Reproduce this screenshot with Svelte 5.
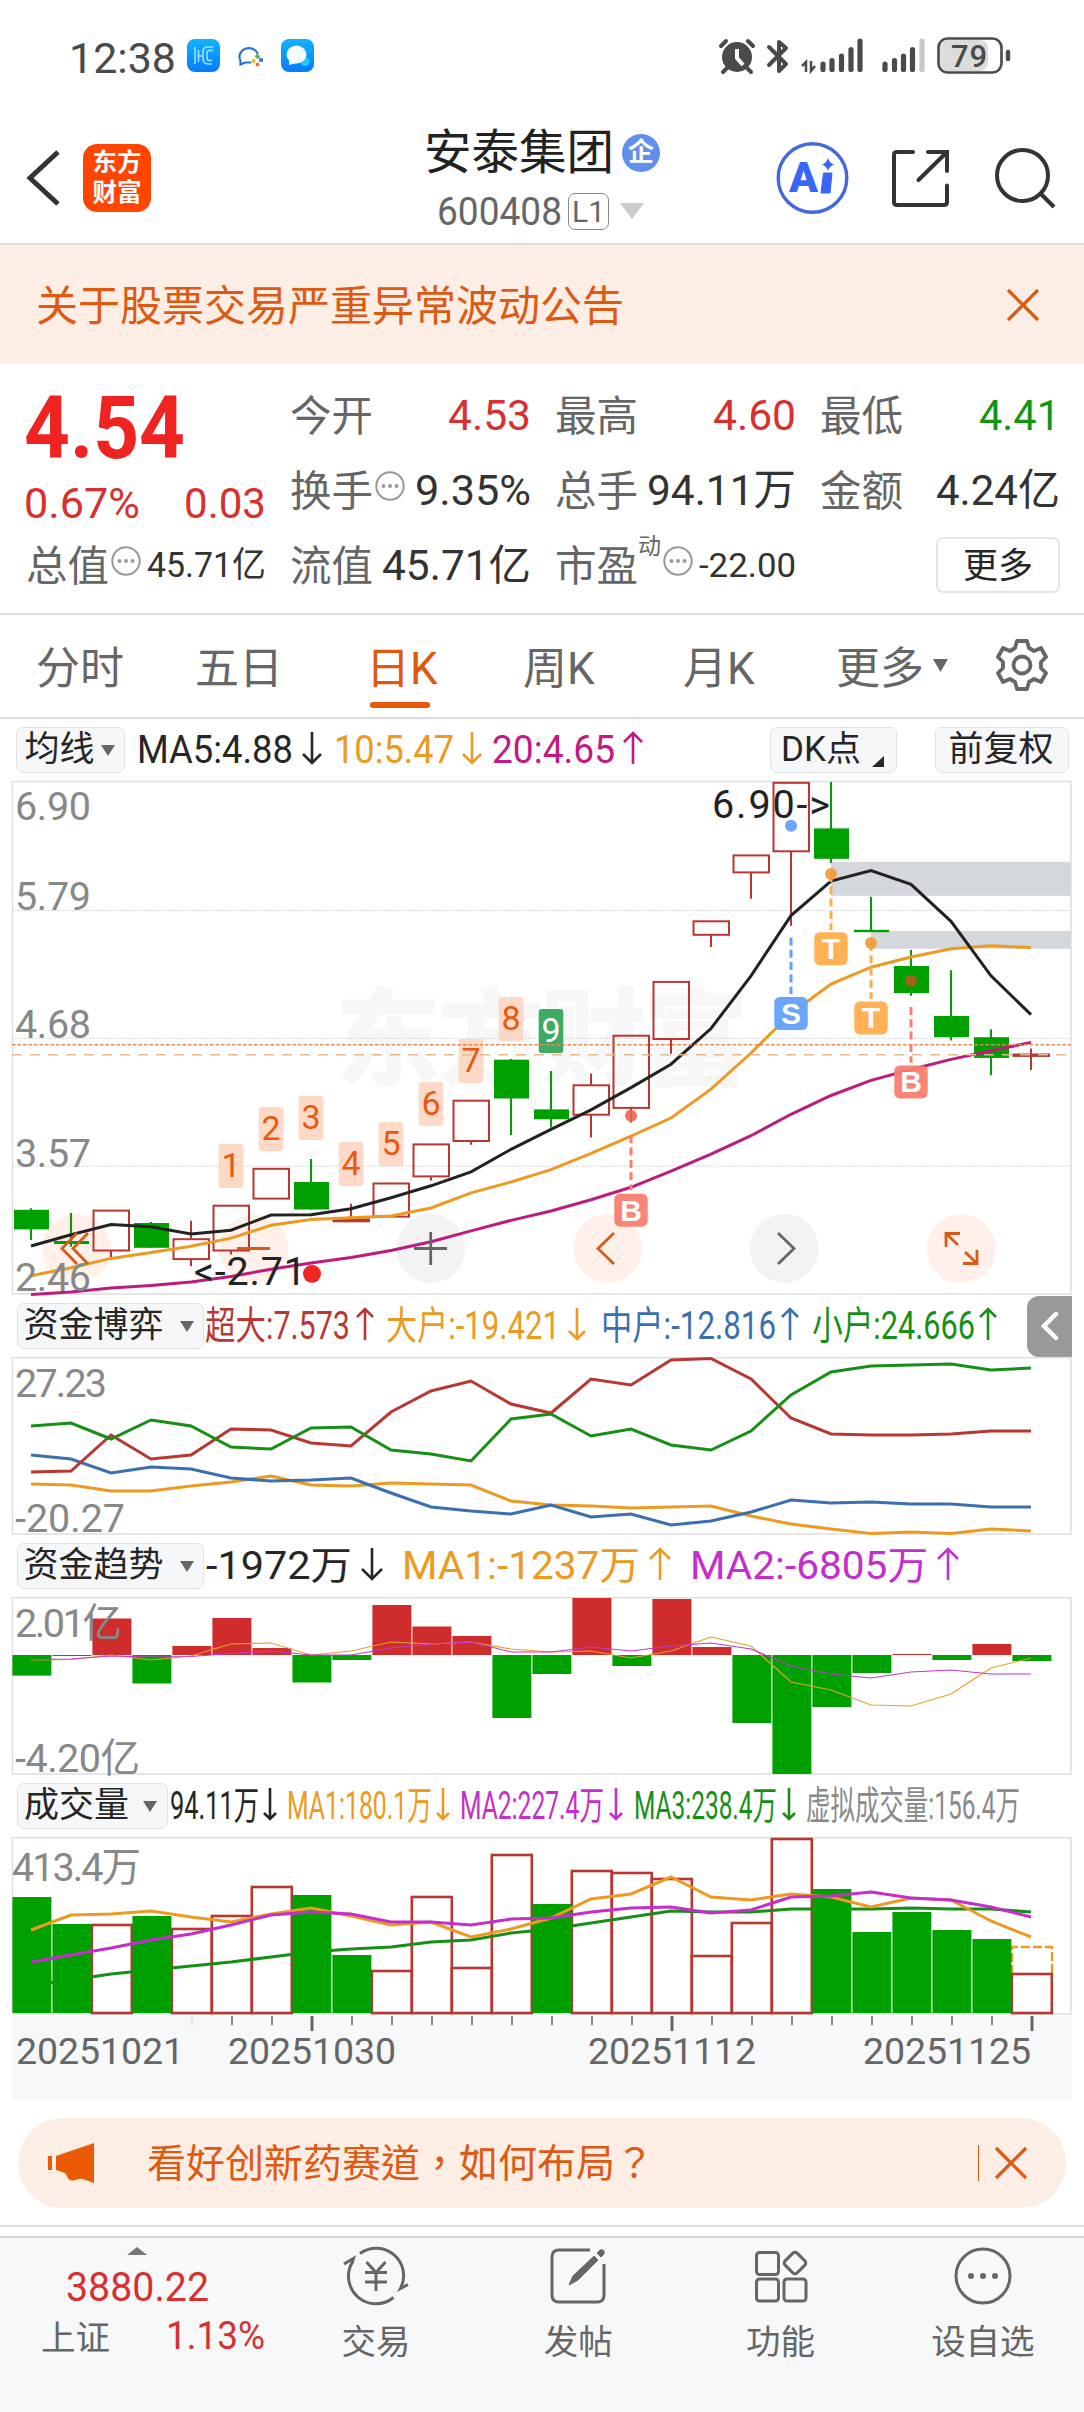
<script lang="ts">
  type Item = { x: number; w: number; t: string; c: string; arrow?: 'up' | 'down'; ax?: number; aw?: number };

  const RED = '#b83733';
  const GREEN = '#00a000';
  const ORANGE = '#ec9a22';
  const PURPLE = '#c42ecb';

  // horizontal centre of the n-th trading day
  const cx = (i: number) => 31 + 40 * i;
  const line = (ys: number[]) => ys.map((y, i) => `${cx(i)},${y}`).join(' ');

  // [up, bodyTop, bodyBottom, high, low]
  const candles: [number, number, number, number, number][] = [
    [0, 1209.8, 1229.4, 1208.3, 1240], [0, 1241, 1244, 1213, 1246.7], [1, 1210.6, 1250.5, 1210.6, 1258],
    [0, 1223, 1247.8, 1222, 1247.8], [1, 1239.2, 1259.1, 1220.8, 1266.3], [1, 1205.7, 1250.5, 1205.7, 1254.6],
    [1, 1168.8, 1198.6, 1168.8, 1198.6], [0, 1182, 1209.5, 1159, 1209.5], [1, 1219.3, 1221.3, 1203.8, 1221],
    [1, 1183.5, 1216.6, 1183.5, 1216.6], [1, 1144.4, 1176.4, 1144.4, 1180.5], [1, 1100.7, 1141, 1100.7, 1144.8],
    [0, 1059.7, 1098.5, 1059, 1135], [0, 1109.4, 1119.2, 1071, 1127.5], [1, 1085.3, 1114.7, 1073.6, 1137.6],
    [1, 1035.7, 1107.9, 1035.7, 1122.6], [1, 981.9, 1039, 981.9, 1053.7], [1, 921.3, 934.8, 921.3, 946.9],
    [1, 855.4, 872.4, 855.4, 898.7], [1, 782.8, 851.3, 782.8, 925.8], [0, 828.4, 858.8, 782, 863],
    [0, 929.8, 932.2, 896.8, 932], [0, 966, 993.1, 949.9, 995.8], [0, 1016, 1037.2, 970.2, 1040.5],
    [0, 1037.2, 1057.9, 1029.3, 1075.2], [1, 1054.5, 1055.9, 1048.4, 1069.9],
  ];
  const ma5 = [1246, 1234.7, 1224.5, 1226.8, 1233.9, 1230.2, 1215.1, 1214.7, 1208.7, 1197.8, 1185.8, 1171.8, 1149.3, 1129.3, 1109.8, 1087.6, 1064.2, 1028.5, 975.8, 915.6, 881, 870.5, 884.4, 921.3, 975.8, 1014.6];
  const ma10 = [1275.7, 1267.8, 1258.4, 1252.4, 1246.3, 1238.1, 1225.3, 1219.6, 1217.7, 1215.9, 1208, 1192.9, 1182, 1169.6, 1153.4, 1136.1, 1118, 1089.1, 1053, 1013.5, 984.1, 967.2, 957, 948.7, 945.7, 947.6];
  const ma20 = [1294.5, 1291.9, 1288.1, 1285.5, 1282.1, 1276.4, 1269.3, 1262.9, 1257.6, 1250.5, 1241.8, 1230.9, 1220.4, 1211, 1199.7, 1187.3, 1171.1, 1154.2, 1135.7, 1114.3, 1095.5, 1080.4, 1069.5, 1059.4, 1050.7, 1042.4];
  const prices = [['6.90', 820], ['5.79', 909.6], ['4.68', 1038], ['3.57', 1166.6], ['2.46', 1290.7]] as const;
  const counts = [1144, 1107, 1096, 1142, 1122, 1082, 1039, 997, 1009];
  const markers = [
    { x: 631, dot: 1115.8, y1: 1135.3, y2: 1190.3, box: 1193.7, t: 'B', c: '#f87e6e', d: '#f0604f' },
    { x: 791, dot: 825.7, y1: 937.5, y2: 994, box: 997, t: 'S', c: '#62a1fa', d: '#5a9cf8' },
    { x: 831, dot: 873.9, y1: 874, y2: 930, box: 932.2, t: 'T', c: '#ffad4b', d: '#f39a32' },
    { x: 871, dot: 943, y1: 943, y2: 999, box: 1001.4, t: 'T', c: '#ffad4b', d: '#f39a32' },
    { x: 911, dot: 980.7, y1: 1007, y2: 1062.7, box: 1065.4, t: 'B', c: '#f87e6e', d: '#b35a1c' },
  ];

  const game = [
    { c: ORANGE, ys: [126, 127, 133, 133, 128, 124, 118, 127, 128, 125, 126, 127, 143, 147, 148, 150, 149, 148, 158, 166, 171, 175.5, 174, 175.5, 171, 173] },
    { c: '#3c6fb0', ys: [97, 101, 115, 109, 111, 120, 123, 122, 120, 135, 149, 153, 156, 147, 159, 156, 167, 163, 154, 142, 145, 144, 146, 146, 149, 149] },
    { c: RED, ys: [114, 113, 77, 101, 97, 71, 72, 85, 88, 54, 33, 23, 46, 55, 21, 27, 2, 0.5, 21, 60, 76, 77, 77, 76, 73, 73] },
    { c: '#178f17', ys: [68, 65, 81, 62, 68, 89, 91, 70, 69, 92, 96, 103, 61, 56, 78, 71, 87, 92, 73, 37, 14, 8, 7, 6, 12, 10] },
  ];

  const flow = [-20.6, -1, 36.5, -28.5, 9, 37, 7, -27.5, -5, 50, 28.5, 19, -63, -19, 57, -11, 56, 8, -68, -119, -52, -18, 1, -5, 11, -6];
  const flowMa1 = [62, 61.5, 57, 62, 58, 46, 45, 57, 53, 44, 46, 44, 51, 54, 53, 60, 53, 39, 48, 84, 92, 107, 108, 96, 70, 60];
  const flowMa2 = [61.5, 61, 58, 59, 58.5, 55.5, 53, 57, 57, 50, 46, 44, 54, 54, 49, 53, 48, 45, 51, 68, 76, 80, 74, 72, 76, 76];

  const volTop = [59, 86, 87, 78, 91, 78, 49, 57, 117, 133, 59, 130, 17, 66, 33, 35, 41, 118, 85, 1, 51, 94, 74, 92, 101, 136];
  const volDown = new Set([0, 1, 3, 7, 8, 13, 20, 21, 22, 23, 24]);
  const volMa1 = [92, 77, 76, 73, 79, 84, 76, 70, 78, 87, 84, 99, 91, 80, 61, 56, 39, 59, 62, 56, 59, 69, 60, 62, 83, 99];
  const volMa2 = [124, 117, 110, 102, 96, 87, 77, 74, 76, 84, 84, 87, 81, 80, 74, 70, 69, 75, 72, 59, 58, 54, 60, 62, 69, 79];
  const volMa3 = [147, 142, 136, 132, 128, 124, 119, 114, 111, 109, 104, 102, 95, 91, 85, 79, 73, 74, 74, 71, 71, 71, 70, 71, 71, 74];

  const maLegend: Item[] = [
    { x: 139, w: 152, t: 'MA5:4.88', c: '#262626', arrow: 'down', ax: 312, aw: 9 },
    { x: 336, w: 116, t: '10:5.47', c: ORANGE, arrow: 'down', ax: 472, aw: 9 },
    { x: 494, w: 119, t: '20:4.65', c: '#c21a80', arrow: 'up', ax: 633, aw: 9 },
  ];
  const gameLegend: Item[] = [
    { x: 207, w: 141, t: '超大:7.573', c: RED, arrow: 'up', ax: 365, aw: 8 },
    { x: 388, w: 170, t: '大户:-19.421', c: ORANGE, arrow: 'down', ax: 577, aw: 8 },
    { x: 603, w: 171, t: '中户:-12.816', c: '#3c6fb0', arrow: 'up', ax: 790, aw: 8 },
    { x: 814, w: 159, t: '小户:24.666', c: '#178f17', arrow: 'up', ax: 988, aw: 8 },
  ];
  const flowLegend: Item[] = [
    { x: 208, w: 142, t: '-1972万', c: '#262626', arrow: 'down', ax: 372, aw: 10 },
    { x: 404, w: 234, t: 'MA1:-1237万', c: ORANGE, arrow: 'up', ax: 660, aw: 10 },
    { x: 692, w: 234, t: 'MA2:-6805万', c: PURPLE, arrow: 'up', ax: 948, aw: 10 },
  ];
  const volLegend: Item[] = [
    { x: 172, w: 85, t: '94.11万', c: '#262626', arrow: 'down', ax: 270, aw: 6 },
    { x: 289, w: 141, t: 'MA1:180.1万', c: ORANGE, arrow: 'down', ax: 443, aw: 6 },
    { x: 462, w: 140, t: 'MA2:227.4万', c: PURPLE, arrow: 'down', ax: 616, aw: 6 },
    { x: 636, w: 139, t: 'MA3:238.4万', c: '#178f17', arrow: 'down', ax: 789, aw: 6 },
    { x: 808, w: 210, t: '虚拟成交量:156.4万', c: '#8a8a8a' },
  ];

  const tabs = ['分时', '五日', '日K', '周K', '月K'];
</script>

<!-- text squeezed or stretched to a fixed width -->
{#snippet fit(t: string, w: number, size: number, color: string, weight = 400)}
  <svg class="fit" width={w} height={size}>
    <text x="-2" y={size * 0.855} textLength={w + 4} lengthAdjust="spacingAndGlyphs" font-size={size} font-weight={weight} fill={color}>{t}</text>
  </svg>
{/snippet}

{#snippet legend(items: Item[], start: number, end = 1020)}
  <svg class="fit" width={end - start} height="46" viewBox="{start} 0 {end - start} 46">
    {#each items as it}
      <text x={it.x - 2} y="36" font-size="38.5" textLength={it.w + 4} lengthAdjust="spacingAndGlyphs" fill={it.c}>{it.t}</text>
      {#if it.arrow}
        <g transform="translate({it.ax} 21) scale(1 {it.arrow === 'up' ? 1 : -1})" fill="none" stroke={it.c} stroke-width="2.6">
          <path d="M0 16V-15M{-(it.aw ?? 8)} {-15 + (it.aw ?? 8)}L0 -15L{it.aw} {-15 + (it.aw ?? 8)}" />
        </g>
      {/if}
    {/each}
  </svg>
{/snippet}

{#snippet info()}
  <svg class="info" width="30" height="30" viewBox="0 0 30 30">
    <circle cx="15" cy="15" r="13.7" fill="none" stroke="#999" stroke-width="2" />
    <g fill="#999"><circle cx="8.5" cy="15" r="2" /><circle cx="15" cy="15" r="2" /><circle cx="21.5" cy="15" r="2" /></g>
  </svg>
{/snippet}

{#snippet close()}
  <svg width="34" height="34" viewBox="0 0 34 34"><path d="M2 2L32 32M32 2L2 32" stroke="#dd5a12" stroke-width="3.2" /></svg>
{/snippet}

<div class="app">
  <div class="status">
    {@render fit('12:38', 103, 43, '#4a4a4a')}
    <svg class="apps" width="130" height="36" viewBox="0 0 130 36">
      <defs><linearGradient id="blue" x2="0" y2="1"><stop stop-color="#12b2fd" /><stop offset="1" stop-color="#087cfb" /></linearGradient></defs>
      <rect x="1" y="1" width="33" height="33" rx="8" fill="url(#blue)" />
      <path d="M9 9V26M12.500 12V24M12.500 18H17M27 9H22Q17 9 17 14V20Q17 26 22 26H26M27 12.500H23Q21 12.500 21 16V19Q21 22.500 23 22.500H26" fill="none" stroke="#9fe0ff" stroke-width="1.600" />
      <path d="M65 24.500H59L54.500 26.500V22.500A9.500 8.500 0 1 1 72 16" fill="none" stroke="#2876c8" stroke-width="2.200" />
      <path d="M70 17L73 20" stroke="#48b64c" stroke-width="3.500" />
      <path d="M66 22L69 24" stroke="#f2bc2b" stroke-width="4" />
      <path d="M73 22H77" stroke="#2f7fd4" stroke-width="3.500" />
      <path d="M71 25L72 28" stroke="#eb6842" stroke-width="3.500" />
      <rect x="95" y="1" width="33" height="33" rx="8" fill="url(#blue)" />
      <circle cx="119" cy="23.500" r="4.500" fill="#20caff" />
      <ellipse cx="110.500" cy="16.500" rx="10" ry="9" fill="#f4fcff" />
      <path d="M103 20V27L111 25Z" fill="#f4fcff" />
    </svg>
    <svg class="signals" width="300" height="40" viewBox="716 36 300 40">
      <g fill="#4a4a4a" stroke="#4a4a4a">
        <circle cx="737" cy="57" r="15" stroke="none" />
        <path d="M721 46L726 41M748 41L753 46M727 68L723 72M747 68L751 72" fill="none" stroke-width="4" stroke-linecap="round" />
        <path d="M737 49V58L743 65" fill="none" stroke="#fff" stroke-width="4" />
        <path d="M769 47L786 64L779 71V42L786 48L769 65" fill="none" stroke-width="4" stroke-linecap="round" stroke-linejoin="round" />
        <path d="M806 72V62L802 66M811 61V71L815 66" fill="none" stroke-width="2.500" />
      </g>
      <g stroke="#4a4a4a" stroke-width="5.200" stroke-linecap="round">
        <path d="M823 64V69.500M832 60.500V69.500M841.500 56V69.500M851 49.500V69.500M860 41V69.500" />
        <path d="M885 64V69.500M894.500 60.500V69.500M903.500 56V69.500M912.500 49.500V69.500" />
        <path d="M922 41V69.500" stroke="#c9c9c9" />
      </g>
      <rect x="940" y="40" width="48" height="31" rx="8" fill="#dcdcdc" />
      <rect x="938.500" y="38.500" width="63" height="34" rx="9" fill="none" stroke="#4a4a4a" stroke-width="2.600" />
      <path d="M1008 52V59" stroke="#4a4a4a" stroke-width="4.400" stroke-linecap="round" />
      <text x="951" y="67" font-size="31" font-weight="500" textLength="36" fill="#4a4a4a">79</text>
    </svg>
  </div>

  <header>
    <svg width="36" height="58" viewBox="0 0 36 58"><path d="M33 3L5 29L33 55" fill="none" stroke="#333" stroke-width="5" /></svg>
    <div class="logo"><span>东方</span><span>财富</span></div>
    <div class="title">
      <div class="name">安泰集团<span class="ent">企</span></div>
      <div class="code">
        {@render fit('600408', 121, 38, '#666')}
        <span class="level">L1</span>
        <svg width="24" height="16" viewBox="0 0 24 16"><path d="M0 0H24L12 16Z" fill="#ccc" /></svg>
      </div>
    </div>
    <svg class="tools" width="284" height="76" viewBox="774 139 284 76" fill="none">
      <circle cx="812.500" cy="177" r="34.300" stroke="#4468e0" stroke-width="3.400" />
      <text x="789" y="190.500" font-size="42" font-weight="900" fill="#3a66f6" textLength="29" lengthAdjust="spacingAndGlyphs">A</text>
      <path d="M823.500 172H832L830 192H821Z" fill="#3a66f6" stroke="#3a66f6" stroke-linejoin="round" />
      <path d="M828 157Q829.500 162 834 163.500Q829.500 165 828 170Q826.500 165 822 163.500Q826.500 162 828 157Z" fill="#3a66f6" />
      <path d="M913 151H897Q894 151 894 154V201Q894 204 897 204H944Q947 204 947 201V184.500M928 151H947V170M946 152L918.500 179" stroke="#333" stroke-width="4" stroke-linecap="round" />
      <circle cx="1022.500" cy="174.500" r="25.500" stroke="#333" stroke-width="4" />
      <path d="M1041 193L1054 206" stroke="#333" stroke-width="4" />
    </svg>
  </header>

  <div class="notice">
    <span>关于股票交易严重异常波动公告</span>
    {@render close()}
  </div>

  <section class="quote">
    <div class="col c1">
      <div class="cell big">{@render fit('4.54', 157, 87, '#f02323', 700)}</div>
      <div class="cell half">{@render fit('0.67%', 112, 43, '#d63031')}{@render fit('0.03', 78, 43, '#d63031')}</div>
      <div class="cell"><span>总值{@render info()}</span>{@render fit('45.71亿', 115, 35, '#333')}</div>
    </div>
    <div class="col c2">
      <div class="cell"><span>今开</span>{@render fit('4.53', 79, 43, '#d63031')}</div>
      <div class="cell"><span>换手{@render info()}</span>{@render fit('9.35%', 112, 43, '#333')}</div>
      <div class="cell"><span>流值</span>{@render fit('45.71亿', 145, 42, '#333')}</div>
    </div>
    <div class="col c3">
      <div class="cell"><span>最高</span>{@render fit('4.60', 79, 43, '#d63031')}</div>
      <div class="cell"><span>总手</span>{@render fit('94.11万', 145, 43, '#333')}</div>
      <div class="cell"><span>市盈<sup>动</sup>{@render info()}</span>{@render fit('-22.00', 93, 34, '#333')}</div>
    </div>
    <div class="col c4">
      <div class="cell"><span>最低</span>{@render fit('4.41', 77, 43, '#129512')}</div>
      <div class="cell"><span>金额</span>{@render fit('4.24亿', 120, 43, '#333')}</div>
      <div class="cell end"><button>更多</button></div>
    </div>
  </section>

  <nav class="tabs">
    {#each tabs as tab}
      <span class:active={tab === '日K'}>{tab}</span>
    {/each}
    <span class="more">更多<svg width="15" height="13" viewBox="0 0 15 13"><path d="M0 0H15L7.500 13Z" fill="#666" /></svg></span>
    <svg class="gear" width="54" height="54" viewBox="-27 -27 54 54" fill="none" stroke="#666" stroke-width="3.800" stroke-linejoin="round">
      <path d="M-5 -24H5L7 -17L12 -14L19 -17L24 -8L19 -3V3L24 8L19 17L12 14L7 17L5 24H-5L-7 17L-12 14L-19 17L-24 8L-19 3V-3L-24 -8L-19 -17L-12 -14L-7 -17Z" />
      <circle r="8.500" />
    </svg>
  </nav>

  <div class="row ma">
    <span class="chip">均线<i></i></span>
    {@render legend(maLegend, 139, 650)}
    <span class="chip dk">DK点<b></b></span>
    <span class="chip adj">前复权</span>
  </div>

  <svg class="plot" width="1060" height="514" viewBox="12 781 1060 514">
    <text x="335" y="1077" font-size="106" font-weight="900" fill="#f7f7f7" textLength="414">东方财富</text>
    <rect x="12.500" y="781.500" width="1058.500" height="512.500" fill="none" stroke="#e0e0e0" stroke-width="1.600" />
    {#each [910.4, 1038.3, 1166.2] as y}
      <path d="M12 {y}H1071" stroke="#ccc" stroke-dasharray="1.500 1.500" />
    {/each}
    <rect x="831" y="861.800" width="240" height="34" fill="#d4d7dc" />
    <rect x="871" y="931" width="200" height="17.700" fill="#d4d7dc" />

    {#each [76.7, 253.7, 430.7, 607.7, 784.3, 961.3] as x, i}
      <circle cx={x} cy="1248.500" r="34.400" fill={i === 2 || i === 4 ? '#f3f3f3' : '#fff1e9'} />
    {/each}

    {#each candles as [up, top, bottom, high, low], i}
      {#if up}
        <path d="M{cx(i)} {high}V{top}M{cx(i)} {bottom}V{low}" stroke={RED} stroke-width="2" />
        <rect x={cx(i) - 17.5} y={top} width="35.500" height={bottom - top} fill="none" stroke={RED} stroke-width="2" />
      {:else}
        <path d="M{cx(i)} {high}V{low}" stroke="#149414" stroke-width="2.200" />
        <rect x={cx(i) - 17} y={top} width="35" height={bottom - top} fill={GREEN} />
      {/if}
    {/each}

    {#each counts as y, i}
      <rect x={cx(i + 5) - 12.3} {y} width="24.600" height="44" rx="3" fill={i === 8 ? '#3fab62' : '#ffd2bd'} fill-opacity={i === 8 ? 1 : 0.85} />
      <text x={cx(i + 5)} y={y + 33} font-size="34" text-anchor="middle" fill={i === 8 ? '#fff' : '#e9590f'}>{i + 1}</text>
    {/each}

    <g fill="none" stroke-width="3">
      <polyline points={line(ma20)} stroke="#bd1c7e" />
      <polyline points={line(ma10)} stroke={ORANGE} />
      <polyline points={line(ma5)} stroke="#222" />
    </g>
    <path d="M12 1044.700H1071" stroke="#e08a55" stroke-width="1.500" stroke-dasharray="3.500 2" />
    <path d="M12 1054.700H1071" stroke="#dfb98f" stroke-width="1.500" stroke-dasharray="10 8" />

    {#each prices as [t, y]}
      <text x="15" {y} font-size="39.500" textLength="76" fill="#888">{t}</text>
    {/each}
    <text x="712" y="818" font-size="39.500" textLength="118" fill="#222">6.90-&gt;</text>
    <text x="194" y="1285" font-size="39.500" textLength="112" fill="#222">&lt;-2.71</text>
    <circle cx="312" cy="1273.800" r="9" fill="#f02525" />

    {#each markers as m}
      <path d="M{m.x} {m.y1}V{m.y2}" stroke={m.c} stroke-width="3" stroke-dasharray="8 4.300" />
      <circle cx={m.x} cy={m.dot} r="6" fill={m.d} fill-opacity="0.9" />
      <rect x={m.x - 16.7} y={m.box} width="33.400" height="33" rx="5.500" fill={m.c} fill-opacity="0.95" />
      <text class="mark" x={m.x} y={m.box + 27} font-size="30" font-weight="700" text-anchor="middle" fill="#fff">{m.t}</text>
    {/each}

    <g fill="none" stroke="#d45c18" stroke-width="2.800">
      <path d="M77 1233L62 1248.500L77 1264M88 1233L73 1248.500L88 1264" />
      <path d="M237 1248.500H270" />
      <path d="M614 1233L598 1248.500L614 1264" />
      <path d="M946 1247V1233.500H960M946 1233.500L958 1245M977 1250V1263.500H963M977 1263.500L965 1252" />
    </g>
    <path d="M414 1248.500H447M430.700 1232V1265M778 1233L794 1248.500L778 1264" fill="none" stroke="#666" stroke-width="2.800" />
  </svg>

  <div class="row">
    <span class="chip wide">资金博弈<i></i></span>
    {@render legend(gameLegend, 207)}
    <span class="fold"><svg width="18" height="30" viewBox="0 0 18 30"><path d="M15 3L3 15L15 27" fill="none" stroke="#fff" stroke-width="4.500" stroke-linecap="round" /></svg></span>
  </div>
  <svg class="plot" width="1060" height="178" viewBox="12 -1 1060 178">
    <rect x="12.500" y="-0.300" width="1058.500" height="176.300" fill="none" stroke="#e0e0e0" stroke-width="1.600" />
    <text x="15" y="39" font-size="39.500" textLength="92" fill="#888">27.23</text>
    <text x="15" y="174" font-size="39.500" textLength="110" fill="#888">-20.27</text>
    {#each game as g}
      <polyline points={line(g.ys)} fill="none" stroke={g.c} stroke-width="3" />
    {/each}
  </svg>

  <div class="row">
    <span class="chip wide">资金趋势<i></i></span>
    {@render legend(flowLegend, 207)}
  </div>
  <svg class="plot" width="1060" height="178" viewBox="12 -1 1060 178">
    <rect x="12.500" y="-0.300" width="1058.500" height="176.300" fill="none" stroke="#e0e0e0" stroke-width="1.600" />
    {#each flow as v, i}
      <rect x={cx(i) - 18.6} y={v > 0 ? 57 - v : 57} width="39" height={Math.abs(v)} fill={v > 0 ? '#cf2d2d' : GREEN} />
    {/each}
    <polyline points={line(flowMa1)} fill="none" stroke="#e8a030" stroke-width="1.200" />
    <polyline points={line(flowMa2)} fill="none" stroke="#c23ac8" stroke-width="1.200" />
    <text x="15" y="39" font-size="39.500" textLength="107" fill="#888">2.01亿</text>
    <text x="15" y="174" font-size="39.500" textLength="125" fill="#888">-4.20亿</text>
  </svg>

  <div class="row">
    <span class="chip vol">成交量<i></i></span>
    {@render legend(volLegend, 172)}
  </div>
  <svg class="plot" width="1060" height="178" viewBox="12 -1 1060 178">
    <rect x="12.500" y="-0.300" width="1058.500" height="176.300" fill="none" stroke="#e0e0e0" stroke-width="1.600" />
    <path d="M1012 136V109H1052V136" fill="none" stroke={ORANGE} stroke-width="2.400" stroke-dasharray="9 3" />
    {#each volTop as y, i}
      {#if !volDown.has(i)}
        <rect x={cx(i) - 19.2} {y} width="40" height={175 - y} fill="none" stroke={RED} stroke-width="2.600" />
      {/if}
    {/each}
    <polyline points={line(volMa3)} fill="none" stroke="#178f17" stroke-width="3" />
    {#each volTop as y, i}
      {#if volDown.has(i)}
        <rect x={cx(i) - 18.6} {y} width="39" height={175 - y} fill={GREEN} />
      {/if}
    {/each}
    <polyline points={line(volMa1)} fill="none" stroke={ORANGE} stroke-width="3" />
    <polyline points={line(volMa2)} fill="none" stroke={PURPLE} stroke-width="3" />
    <text x="12" y="43" font-size="39.500" textLength="129" fill="#888">413.4万</text>
  </svg>

  <svg class="plot axis" width="1060" height="84" viewBox="12 2016 1060 84">
    {#each Array(22) as _, k}
      {@const i = k + 4}
      {#if i % 9 === 7}
        <path d="M{cx(i) + 1} 2016V2031" stroke="#666" stroke-width="3" />
      {:else}
        <path d="M{cx(i) + 1} 2016V2025" stroke={i === 4 ? '#e4e4e4' : '#888'} stroke-width="2" />
      {/if}
    {/each}
    <g font-size="37.500" fill="#666">
      <text x="16" y="2064" textLength="168">20251021</text>
      <text x="228" y="2064" textLength="168">20251030</text>
      <text x="588" y="2064" textLength="168">20251112</text>
      <text x="863" y="2064" textLength="168">20251125</text>
    </g>
  </svg>

  <div class="promo">
    <svg width="48" height="42" viewBox="0 0 48 42" fill="#eb5a05"><path d="M1 14H5V28H1ZM9 14L47 1V41L36 37Q34 36 28 38Q22 40 20 34L18 31L9 28Z" /></svg>
    <span>看好创新药赛道，如何布局？</span>
    <i></i>
    {@render close()}
  </div>

  <footer>
    <div class="index">
      <svg width="20" height="8" viewBox="0 0 20 8"><path d="M0 8H20L10 0Z" fill="#777" /></svg>
      {@render fit('3880.22', 139, 40, '#d63031')}
      <div class="pair"><span>上证</span>{@render fit('1.13%', 95, 38, '#d63031')}</div>
    </div>
    <div class="item">
      <svg width="66" height="60" viewBox="-33 -30 66 60" fill="none" stroke="#666" stroke-width="3">
        <path d="M-16 -22.500A27.500 27.500 0 0 1 24.500 12.500L32 8.500M17.500 21.500A27.500 27.500 0 0 1 -23.500 -14L-22.500 -17.500L-32 -12" />
        <path d="M-9.500 -14L0 -3.500L9.500 -14M0 -3.500V15M-11 -3.500H11M-11 6H11" />
      </svg>
      <span>交易</span>
    </div>
    <div class="item">
      <svg width="60" height="60" viewBox="-30 -30 60 60" fill="none" stroke="#666" stroke-width="3">
        <path d="M12 -26H-19Q-26 -26 -26 -19V19Q-26 26 -19 26H19Q26 26 26 19V-12" />
        <path d="M-9 9L-5 0L16 -20L20 -16L0 4Z" fill="#666" stroke-width="1" />
        <path d="M19 -23L22 -26Q27 -27 26 -22L23 -19Z" fill="#666" stroke-width="1" />
      </svg>
      <span>发帖</span>
    </div>
    <div class="item">
      <svg width="60" height="60" viewBox="-30 -30 60 60" fill="none" stroke="#666" stroke-width="3">
        <rect x="-24.500" y="-23.500" width="22" height="22" rx="3" /><rect x="-24.500" y="3" width="22" height="22" rx="3" /><rect x="3" y="3" width="22" height="22" rx="3" />
        <rect x="5.500" y="-21.500" width="17" height="17" rx="3" transform="rotate(45 14 -13)" />
      </svg>
      <span>功能</span>
    </div>
    <div class="item">
      <svg width="60" height="60" viewBox="-30 -30 60 60">
        <circle r="27" fill="none" stroke="#666" stroke-width="3" />
        <g fill="#666"><circle cx="-12" r="3" /><circle r="3" /><circle cx="12" r="3" /></g>
      </svg>
      <span>设自选</span>
    </div>
  </footer>
</div>

<style>
  :global(body) {
    margin: 0;
    background: #fff;
  }

  .app {
    width: 1084px;
    height: 2412px;
    overflow: hidden;
    display: flex;
    flex-direction: column;
    font-family: Roboto, 'Noto Sans CJK SC', sans-serif;
    color: #666;
  }

  .app > * {
    flex: none;
    box-sizing: border-box;
  }

  svg {
    display: block;
    flex: none;
  }

  .fit {
    overflow: visible;
  }

  .status {
    height: 114px;
    padding: 0 68px 0 71px;
    display: flex;
    align-items: center;
  }

  .apps {
    margin: -2px 0 0 12px;
  }

  .signals {
    margin: -2px 0 0 auto;
  }

  header {
    height: 131px;
    padding: 0 26px 2px 25px;
    border-bottom: 2px solid #dcdcdf;
    display: flex;
    align-items: center;
  }

  .logo {
    width: 68px;
    height: 68px;
    margin-left: 22px;
    border-radius: 14px;
    background: #ff4500;
    color: #fff;
    font-size: 24.5px;
    font-weight: 700;
    line-height: 29.5px;
    display: flex;
    flex-direction: column;
    align-items: center;
    justify-content: center;
  }

  .title {
    width: 240px;
    margin-left: 273px;
  }

  .name {
    font-size: 47.5px;
    line-height: 56px;
    color: #222;
    display: flex;
    align-items: center;
    white-space: nowrap;
  }

  .ent {
    width: 38px;
    height: 38px;
    margin-left: 8px;
    border-radius: 50%;
    background: #6090ea;
    color: #fff;
    font-size: 26px;
    font-weight: 700;
    line-height: 37px;
    text-align: center;
  }

  .code {
    margin: 11px 0 0 15px;
    display: flex;
    align-items: center;
  }

  .level {
    box-sizing: border-box;
    width: 41px;
    height: 37px;
    margin: 0 11px 0 8px;
    border: 1.5px solid #888;
    border-radius: 7px;
    font-size: 30px;
    line-height: 35px;
    text-align: center;
  }

  .tools {
    margin-left: auto;
  }

  .notice {
    height: 119px;
    padding: 0 44px 0 36px;
    background: #fdeee5;
    color: #dd5a12;
    font-size: 42px;
    display: flex;
    align-items: center;
    justify-content: space-between;
  }

  .notice span {
    margin-top: -5px;
  }

  .quote {
    height: 251px;
    padding: 13px 26px 0;
    border-bottom: 2px solid #dcdcdf;
    display: flex;
    justify-content: space-between;
  }

  .c1,
  .c4 {
    width: 238px;
  }

  .c2,
  .c3 {
    width: 239px;
  }

  .cell {
    height: 75px;
    display: flex;
    align-items: center;
    justify-content: space-between;
    font-size: 41.5px;
  }

  .cell.big {
    height: 100px;
  }

  .cell.half {
    height: 50px;
  }

  .cell.end {
    justify-content: flex-end;
  }

  .cell span {
    margin-top: -3px;
    display: flex;
    align-items: center;
  }

  sup {
    align-self: flex-start;
    margin-top: 2px;
    font-size: 23px;
    line-height: 23px;
  }

  .info {
    margin: -4px 0 0 2px;
  }

  button {
    width: 124px;
    height: 56px;
    margin-right: -2px;
    padding: 0 0 5px;
    border: 2px solid #e6e6e9;
    border-radius: 7px;
    background: #fff;
    color: #262626;
    font: 35px 'Noto Sans CJK SC', sans-serif;
    line-height: 47px;
  }

  .tabs {
    height: 104px;
    padding: 0 35px 2px 36px;
    border-bottom: 2px solid #dcdcdf;
    font-size: 44px;
    display: grid;
    grid-template-columns: 159px 171px 157px 160px 153px 1fr auto;
    align-items: center;
  }

  .active {
    position: relative;
    color: #e0590c;
  }

  .active::after {
    content: '';
    position: absolute;
    left: 4px;
    bottom: -11px;
    width: 60px;
    height: 6px;
    border-radius: 3px;
    background: #e8590c;
  }

  .more {
    display: flex;
    align-items: center;
    gap: 9px;
  }

  .row {
    height: 62px;
    padding-left: 17px;
    display: flex;
    align-items: center;
  }

  .row.ma {
    padding: 0 15px 0 16px;
  }

  .row.ma .fit {
    margin-left: 14px;
  }

  .chip {
    box-sizing: border-box;
    width: 109px;
    height: 46px;
    border: 1.5px solid #dfe2e7;
    border-radius: 7px;
    background: #f6f7f9;
    color: #262626;
    font-size: 35px;
    line-height: 42px;
    flex: none;
    display: flex;
    align-items: center;
    justify-content: center;
    gap: 6px;
  }

  .chip i {
    border: 7.5px solid transparent;
    border-top: 11px solid #666;
    border-bottom: 0;
  }

  .row.ma .chip {
    padding-right: 2px;
  }

  .row .wide {
    width: 187px;
    margin-right: 3px;
    padding-right: 4px;
    gap: 16px;
  }

  .row .vol {
    width: 151px;
    margin-right: 4px;
    padding-right: 4px;
    gap: 14px;
  }

  .row .dk {
    width: 127px;
    margin-left: auto;
    padding-right: 0;
    gap: 11px;
  }

  .dk b {
    margin-top: 22px;
    border-left: 12px solid transparent;
    border-bottom: 11px solid #262626;
  }

  .row .adj {
    width: 134px;
    margin-left: 38px;
    padding-right: 0;
  }

  .fold {
    width: 45px;
    height: 61px;
    margin: 0 12px 0 auto;
    border-radius: 12px 0 0 12px;
    background: #999;
    display: flex;
    align-items: center;
    justify-content: center;
  }

  .plot {
    margin-left: 12px;
    overflow: visible;
  }

  .mark {
    font-family: 'Liberation Sans', sans-serif;
  }

  .axis {
    margin-top: 1px;
    background: #f7f8fa;
  }

  .promo {
    width: 1048px;
    height: 90px;
    margin: 18px 0 28px 18px;
    padding: 0 38px 0 29px;
    border-radius: 45px;
    background: #fdeee5;
    color: #dd5a12;
    font-size: 39px;
    display: flex;
    align-items: center;
  }

  .promo span {
    margin: -6px 0 0 52px;
    font-family: 'Noto Sans CJK TC', 'Noto Sans CJK SC', sans-serif;
  }

  .promo i {
    width: 1px;
    height: 36px;
    margin: 0 15px 0 auto;
    background: #dd5a12;
  }

  footer {
    height: 176px;
    border-top: 2px solid #d6d7da;
    background: #f7f8fa;
    font-size: 34.5px;
    display: flex;
    position: relative;
  }

  /* bottom edge of the scroll area just above the bar */
  footer::before {
    content: '';
    position: absolute;
    left: 0;
    right: 0;
    top: -13px;
    height: 8px;
    border-top: 2px solid #dcdcdf;
    background: #fff;
  }

  .index {
    width: 275px;
    display: flex;
    flex-direction: column;
    align-items: center;
    padding-top: 9px;
  }

  .index .fit {
    margin-top: 12px;
  }

  .pair {
    width: 222px;
    margin: 3px 0 0 41px;
    display: flex;
    align-items: center;
    justify-content: space-between;
    align-self: flex-start;
  }

  .pair .fit {
    margin-top: 0;
  }

  .item {
    width: 202.3px;
    display: flex;
    flex-direction: column;
    align-items: center;
    padding-top: 8px;
  }

  .item svg {
    height: 60px;
  }

  .item span {
    margin-top: 12px;
    line-height: 48px;
  }
</style>
